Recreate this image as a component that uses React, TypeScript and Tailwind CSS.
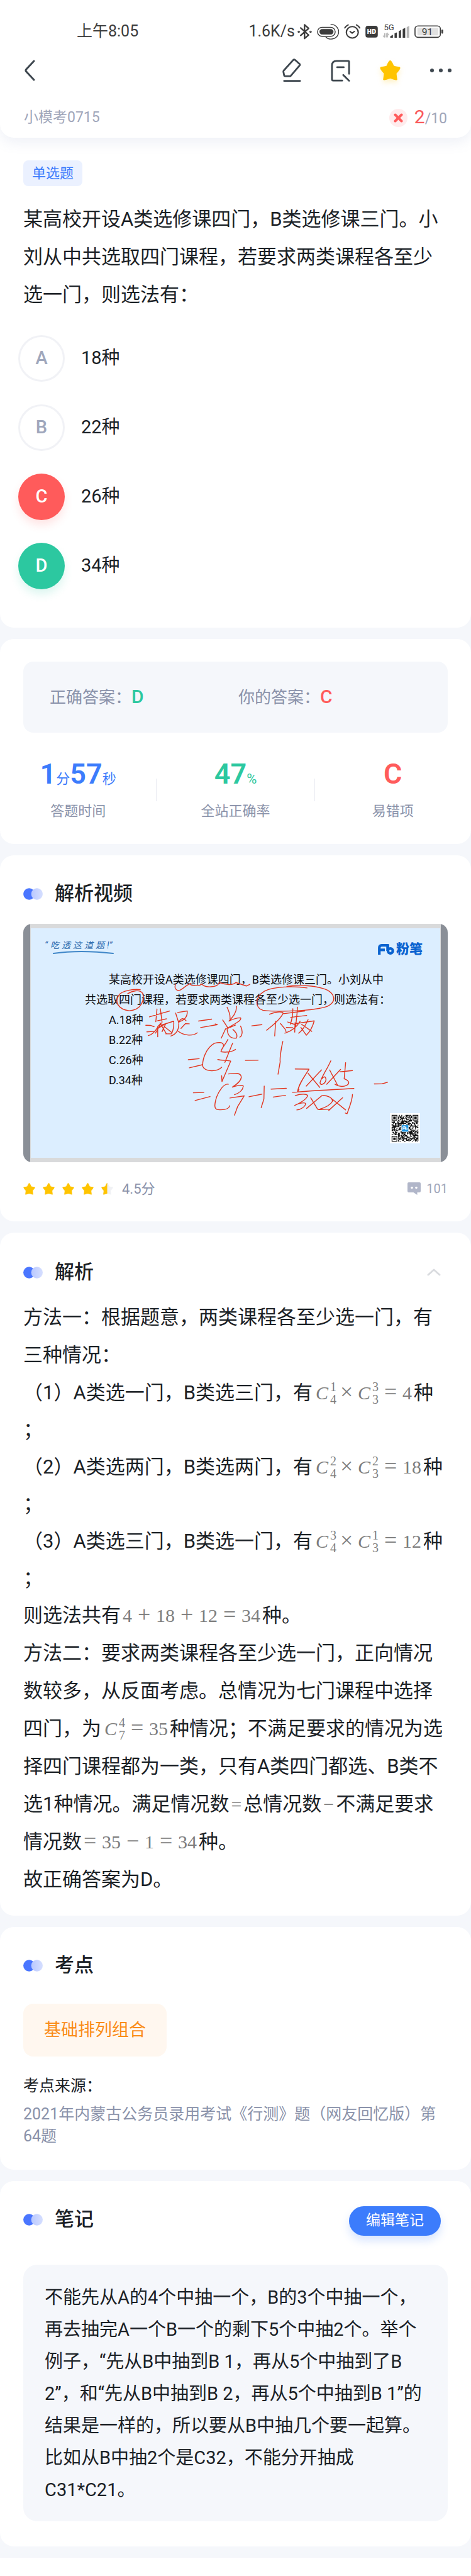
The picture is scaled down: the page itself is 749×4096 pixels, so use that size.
import React from "react";

const STAR =
  "M1040 314 Q1046 314 1059 348 Q1062 353 1100 358 Q1106 362 1077 394 Q1075 398 1081 438 Q1079 441 1040 425 Q1001 441 999 438 Q1005 398 1003 394 Q974 362 980 358 Q1018 353 1021 348 Q1034 314 1040 314 Z";

function StatusBar() {
  return (
    <div className="flex h-[50px] items-center justify-between pl-[122px] pr-[44px] text-[25px] font-normal text-[#3c3c3c]">
      <span>上午8:05</span>
      <div className="flex items-center gap-2">
        <div className="flex items-center gap-1">
          <span>1.6K/s</span>
          <svg className="h-[25px] w-[23px]" viewBox="402 70 98 110" preserveAspectRatio="none" fill="none" stroke="#3c3c3c" strokeWidth="10" strokeLinecap="round" strokeLinejoin="round" aria-label="蓝牙">
            <path d="M424 98 L478 148 L450 172 L450 76 L478 101 L424 151" />
            <circle cx="411" cy="125" r="3" />
            <circle cx="491" cy="125" r="3" />
          </svg>
        </div>
        <svg className="h-[25px] w-[35px]" viewBox="535 70 147 110" preserveAspectRatio="none" fill="none" stroke="#3c3c3c" strokeWidth="6" aria-label="手环">
          <rect x="539" y="94" width="118" height="63" rx="31" />
          <rect x="553" y="107" width="91" height="36" rx="18" fill="#3c3c3c" strokeWidth="3" />
          <path d="M626 74 A51 51 0 1 1 594 162" />
        </svg>
        <svg className="h-[25px] w-[26px]" viewBox="714 70 110 110" preserveAspectRatio="none" fill="none" stroke="#3c3c3c" strokeWidth="9" strokeLinecap="round" aria-label="闹钟">
          <circle cx="770" cy="129" r="40" />
          <path d="M720 98 Q728 84 742 77 M798 77 Q812 84 820 98 M755 123 L769 135 L784 123" />
        </svg>
        <svg className="h-[25px] w-[20px]" viewBox="857 70 87 110" preserveAspectRatio="none" aria-label="HD">
          <rect x="858" y="83" width="85" height="83" rx="17" fill="#3c3c3c" />
          <text x="900" y="141" textAnchor="middle" fontSize="43" fontWeight="800" fill="#fff" fontFamily="Open Sans, sans-serif">HD</text>
        </svg>
        <svg className="h-[25px] w-[42px] overflow-visible" viewBox="976 70 178 110" preserveAspectRatio="none" aria-label="5G">
          <text x="982" y="113" fontSize="56" fill="#3c3c3c" fontFamily="Roboto, sans-serif">5G</text>
          <path d="M987 135 V165 M976 152 L987 165 M998 135 V165 M1007 165 V137 L1016 150" fill="none" stroke="#b5b5b5" strokeWidth="6" />
          <path d="M1025 167 V157 L1043 146 V167 Z M1054 167 V136 L1070 129 V167 Z M1082 167 V122 L1098 112 V167 Z M1109 167 V106 L1126 97 V167 Z" fill="#3c3c3c" />
          <path d="M1136 167 V93 L1153 83 V167 Z" fill="#b5b5b5" />
        </svg>
        <svg className="h-[25px] w-[46px]" viewBox="1190 70 194 110" preserveAspectRatio="none" aria-label="电量">
          <rect x="1194" y="84" width="170" height="80" rx="20" fill="none" stroke="#3c3c3c" strokeWidth="7" />
          <rect x="1210" y="98" width="140" height="52" rx="5" fill="#e1e1e1" />
          <rect x="1371" y="110" width="12" height="28" rx="5" fill="#3c3c3c" />
          <text x="1277" y="148" textAnchor="middle" fontSize="66" fill="#3c3c3c" fontFamily="Roboto, sans-serif">91</text>
        </svg>
      </div>
    </div>
  );
}

function TopBar() {
  return (
    <header className="relative z-10 rounded-b-[22px] bg-white pt-[25px] pb-[10px] shadow-[0_8px_20px_rgba(120,140,190,0.12)]">
      <StatusBar />
      <nav className="flex h-[74px] items-center justify-between pr-[31px] pl-[38px]">
        <button type="button" aria-label="返回">
          <svg className="h-[34px] w-[20px]" viewBox="0 0 20 34" fill="none" stroke="#3e474f" strokeWidth="3" strokeLinecap="round" strokeLinejoin="round">
            <path d="M16 2 L3.5 15.5 Q2.4 17 3.5 18.5 L16 32" />
          </svg>
        </button>
        <div className="flex items-center gap-[47px]">
          <button type="button" aria-label="草稿">
            <svg className="h-[38px] w-[30px]" viewBox="321 310 128 166" preserveAspectRatio="none" fill="none" stroke="#3e474f" strokeWidth="12" strokeLinecap="round" strokeLinejoin="round">
              <path d="M395 320 Q401 315 407 320 L437 347 Q443 353 438 359 L376 433 L342 433 Q334 433 333 427 L328 402 Q328 397 331 393 Z M333 466 H441" />
            </svg>
          </button>
          <button type="button" aria-label="笔记">
            <svg className="h-[35px] w-[31px]" viewBox="648 317 131 152" preserveAspectRatio="none" fill="none" stroke="#3e474f" strokeWidth="12" strokeLinecap="round" strokeLinejoin="round">
              <path d="M771 414 V331 Q771 325 764 325 H688 Q656 325 656 358 V452 Q656 461 664 461 H725 M691 369 H735 M732 422 L771 462" />
            </svg>
          </button>
          <button type="button" aria-label="收藏">
            <svg className="h-[32px] w-[33px] drop-shadow-[0_4px_4px_rgba(255,196,0,0.25)]" viewBox="971 308 138 138" preserveAspectRatio="none" fill="#ffc400" stroke="#ffc400" strokeWidth="12" strokeLinejoin="round">
              <path d={STAR} />
            </svg>
          </button>
          <button type="button" aria-label="更多">
            <svg className="h-[6px] w-[34px]" viewBox="0 0 34 6" fill="#3e474f">
              <circle cx="3" cy="3" r="3" />
              <circle cx="17" cy="3" r="3" />
              <circle cx="31" cy="3" r="3" />
            </svg>
          </button>
        </div>
      </nav>
      <div className="mt-4 flex h-[44px] items-center justify-between px-[38px] text-[23px] text-[#9fa6ba]">
        <h1>小模考0715</h1>
        <div className="flex items-center gap-[11px]">
          <span className="flex size-[29px] items-center justify-center rounded-full bg-[#ffeced]">
            <svg className="size-[15px]" viewBox="0 0 15 15" stroke="#ff5b5b" strokeWidth="4" strokeLinecap="round">
              <path d="M2.5 2.5 L12.5 12.5 M12.5 2.5 L2.5 12.5" />
            </svg>
          </span>
          <span className="flex items-baseline leading-[44px]">
            <span className="text-[30px] text-[#f9585b]">2</span>/10
          </span>
        </div>
      </div>
    </header>
  );
}

const OPTIONS = [
  { key: "A", text: "18种", tone: "border-[3px] border-[#f1f2f6] bg-white text-[#a0a7bc]" },
  { key: "B", text: "22种", tone: "border-[3px] border-[#f1f2f6] bg-white text-[#a0a7bc]" },
  { key: "C", text: "26种", tone: "bg-[#ff5b5b] text-white shadow-[0_8px_14px_rgba(255,91,91,0.16)]" },
  { key: "D", text: "34种", tone: "bg-[#2cc8a0] text-white shadow-[0_8px_14px_rgba(44,200,160,0.16)]" },
];

function Question() {
  return (
    <section className="rounded-b-[22px] bg-white pt-[36px] pb-[61px]">
      <div className="px-[37px]">
        <span className="inline-flex h-[41px] items-center rounded-lg bg-[#ebf1ff] px-[14px] align-top text-[22px] text-[#3c7cfc]">单选题</span>
        <p className="mt-[23px] text-[31px] leading-[60px]">某高校开设A类选修课四门，B类选修课三门。小刘从中共选取四门课程，若要求两类课程各至少选一门，则选法有：</p>
      </div>
      <div className="mt-[34px] flex flex-col items-start gap-[36px] pl-[29px]">
        {OPTIONS.map((o) => (
          <button key={o.key} type="button" className="flex items-center gap-[26px] text-[29px]">
            <span className={`flex size-[74px] items-center justify-center rounded-full font-medium ${o.tone}`}>{o.key}</span>
            <span>{o.text}</span>
          </button>
        ))}
      </div>
    </section>
  );
}

function Stat({ label, tone, children }: { label: string; tone: string; children: React.ReactNode }) {
  return (
    <div>
      <div className={`flex h-[50px] items-baseline justify-center text-[22px] leading-[50px] ${tone}`}>{children}</div>
      <div className="mt-[19px] text-center text-[22px] leading-[30px] text-[#8a92aa]">{label}</div>
    </div>
  );
}

function Big({ children }: { children: React.ReactNode }) {
  return <span className="text-[45px] font-semibold">{children}</span>;
}

function Result() {
  return (
    <section className="rounded-[22px] bg-white pt-[36px] pb-[37px]">
      <div className="mx-[37px] grid h-[113px] grid-cols-2 items-center rounded-[16px] bg-[#f5f7fb] pr-[33px] pl-[42px] text-[26px] text-[#8a92aa]">
        <div className="flex items-baseline leading-[44px]">
          正确答案：<span className="text-[30px] font-medium text-[#2cc8a0]">D</span>
        </div>
        <div className="flex items-baseline leading-[44px]">
          你的答案：<span className="text-[30px] font-medium text-[#ff5b5b]">C</span>
        </div>
      </div>
      <div className="mt-[41px] flex items-center">
        <div className="flex-1">
          <Stat label="答题时间" tone="text-[#3c7cfc]">
            <Big>1</Big>分<Big>57</Big>秒
          </Stat>
        </div>
        <div className="h-[36px] w-[2px] bg-[#f1f2f6]" />
        <div className="flex-1">
          <Stat label="全站正确率" tone="text-[#2cc8a0]">
            <Big>47</Big>%
          </Stat>
        </div>
        <div className="h-[36px] w-[2px] bg-[#f1f2f6]" />
        <div className="flex-1">
          <Stat label="易错项" tone="text-[#ff5b5b]">
            <Big>C</Big>
          </Stat>
        </div>
      </div>
    </section>
  );
}

function Heading({ title, children }: { title: string; children?: React.ReactNode }) {
  return (
    <div className="flex h-[44px] items-center justify-between pr-[11px]">
      <div className="flex items-center gap-[19px]">
        <svg className="h-[19px] w-[31px]" viewBox="0 0 31 19">
          <defs>
            <linearGradient id="dot" x1="0" x2="1">
              <stop offset="0" stopColor="#b9c8ff" />
              <stop offset="1" stopColor="#d6dfff" />
            </linearGradient>
          </defs>
          <circle cx="9.3" cy="9.5" r="9.2" fill="#4a76ff" />
          <circle cx="21.8" cy="9.5" r="9.2" fill="url(#dot)" />
        </svg>
        <h2 className="text-[31px] leading-[44px] font-medium">{title}</h2>
      </div>
      {children}
    </div>
  );
}

const INK_MARKS =
  "M585 438 C578 455 588 470 598 466 C608 460 622 440 635 434 C628 445 660 450 672 437 C680 455 725 455 730 430 C750 440 775 445 785 430 L820 446 L832 438 M425 482 C440 468 465 460 475 480 C482 510 470 558 430 560 C395 555 380 520 395 490 C405 465 450 460 467 463 M1022 455 C980 445 910 448 880 470 C845 500 850 550 875 558 C930 568 1050 560 1090 540 C1125 515 1110 480 1090 465 C1060 445 990 438 955 448";

const INK_LEFT =
  "M488 158 L627 118 M540 104 L532 192 M563 102 L575 195 M463 216 L495 217 L520 226 M470 262 L525 258 M480 287 C500 285 520 270 545 230 M545 185 L605 172 M530 270 L570 200 L545 225 L545 295 M570 215 L655 188 C658 220 650 260 640 275 L600 275 M560 200 L605 275 M590 225 L640 265 M550 235 L600 205 L575 260 M682 128 L748 118 C750 150 735 180 692 192 M668 132 L690 200 C700 170 720 160 740 185 M705 238 L735 205 L762 206 M690 205 C690 240 680 275 635 290 M683 255 C720 285 780 295 817 268 M826 187 L916 174 M840 232 L955 212 L940 207 M1022 92 C1035 120 1045 150 1042 172 M1088 85 C1085 130 1070 150 1035 187 C1060 175 1090 165 1115 165 C1125 180 1080 205 1020 238 M992 180 L1030 238 M1012 240 L982 305 M1022 240 C1025 280 1040 310 1085 305 C1095 290 1090 270 1062 245 M1115 222 C1130 250 1130 285 1110 298 M1040 232 L1080 215 M1192 220 L1262 212 M755 453 L830 446 M763 509 L852 488 M997 355 C997 335 975 330 935 340 C880 370 850 450 855 500 C870 535 950 540 985 505 M1028 313 C1015 345 985 370 980 398 C1010 405 1060 400 1080 382 M1060 340 L1007 472 M958 452 C980 458 1020 458 1047 463 L987 604 L985 563 M1148 458 L1236 457 M790 681 L862 679 M802 734 L905 707 M1030 622 C1000 615 965 670 950 710 C935 760 930 795 960 797 C1000 800 1035 795 1040 770 M1033 551 C1070 545 1120 540 1120 575 C1115 605 1085 625 1058 642 C1090 630 1130 625 1134 635 C1130 665 1100 685 1073 694 M1042 717 L1140 702 L1095 775 L1073 835 M1173 708 L1262 690";

const INK_RIGHT =
  "M55 635 C90 620 140 615 148 628 C130 670 70 710 35 738 M97 680 L90 775 M130 695 L165 735 L168 747 M150 632 L297 614 M215 600 C215 650 210 670 197 700 M248 590 L235 710 M200 655 L310 643 M180 685 L225 700 M170 720 L215 722 M160 757 C200 745 240 720 265 680 M230 690 L228 750 M235 695 L362 678 C350 720 330 750 308 770 L270 720 M320 670 C300 710 275 745 255 757 M275 700 L345 745 M146 810 C130 870 125 930 128 940 L113 1020 M18 1097 L16 1180 L-3 1235 M65 1116 L170 1111 M80 1167 L165 1156 M231 987 L326 988 C300 1030 255 1080 247 1135 L257 1120 M320 1015 L400 1105 M412 993 L307 1097 M476 934 C450 990 410 1040 402 1075 C405 1100 440 1080 443 1055 C440 1030 425 1035 415 1050 M468 993 L523 1092 M543 990 L448 1085 M578 946 L568 1050 C600 1060 610 1080 585 1092 C560 1102 530 1100 505 1085 M540 1005 L625 997 M212 1137 C350 1125 500 1120 635 1112 M231 1158 C270 1145 310 1145 317 1158 C310 1180 265 1205 228 1221 C260 1205 300 1200 303 1210 C300 1230 265 1250 242 1250 M338 1172 L385 1245 M412 1160 L310 1240 M415 1158 C450 1155 490 1170 487 1195 C470 1225 420 1240 390 1248 L470 1245 M478 1175 L578 1250 M557 1172 L462 1253 M625 1150 C625 1190 600 1240 588 1274 L576 1270 M775 1083 L830 1082 L866 1072";

function qrModules() {
  const n = 33;
  let seed = 7;
  let d = "";
  for (let y = 0; y < n; y++) {
    for (let x = 0; x < n; x++) {
      seed = (seed * 1103515245 + 12345) % 2147483648;
      const inFinder = (x < 8 && y < 8) || (x > n - 9 && y < 8) || (x < 8 && y > n - 9);
      if (!inFinder && seed / 2147483648 > 0.48) d += `M${x} ${y}h1.1v1.1h-1.1z`;
    }
  }
  return d;
}

function QrCode() {
  return (
    <svg className="absolute top-[301px] right-[44px] size-[48px]" viewBox="-2.2 -2.2 37.4 37.4" aria-label="二维码">
      <rect x="-2.2" y="-2.2" width="37.4" height="37.4" fill="#fff" />
      <path d={qrModules()} fill="#111" />
      {[[0, 0], [26, 0], [0, 26]].map(([x, y]) => (
        <g key={`${x}-${y}`} fill="#111">
          <path d={`M${x} ${y}h7v7h-7z M${x + 1} ${y + 1}v5h5v-5z`} />
          <rect x={x + 2} y={y + 2} width="3" height="3" />
        </g>
      ))}
      <rect x="12.3" y="12.3" width="8.6" height="8.6" rx="1" fill="#1d97e6" stroke="#fff" strokeWidth="0.5" />
      <path d="M14 18.6 V15.4 Q14 14.6 14.9 14.6 H16.6 V17.6 M14 16.6 H16 M17 14.6 V17.5 M19.3 17.3 A1.1 1.1 0 1 1 17 17.3 A1.1 1.1 0 1 1 19.3 17.3" fill="none" stroke="#fff" strokeWidth="0.9" />
    </svg>
  );
}

function Slide() {
  return (
    <figure className="relative mt-[26px] flex h-[379px] overflow-hidden rounded-[14px] bg-[#8a8f97] px-[11px]">
      <div className="flex-1 border-x border-t-[7px] border-b-[7px] border-[#d9dadb] bg-[#dceeff] pt-[66px] pl-[86px] text-[18px] leading-[32px] whitespace-nowrap text-[#0c0c10]">
        <p className="pl-[38px]">某高校开设A类选修课四门，B类选修课三门。小刘从中</p>
        <p>共选取四门课程，若要求两类课程各至少选一门，则选法有：</p>
        <ul className="pl-[38px]">
          <li>A.18种</li>
          <li>B.22种</li>
          <li>C.26种</li>
          <li>D.34种</li>
        </ul>
      </div>
      <div className="absolute top-[22px] left-[34px] flex items-center gap-[4px] text-[14px] leading-[24px] text-[#2a69ad] italic">
        <span>“</span>
        <span>吃</span>
        <span>透</span>
        <span>这</span>
        <span>道</span>
        <span>题</span>
        <span>!”</span>
      </div>
      <div className="absolute top-[28px] right-[40px] flex items-center gap-[3px] text-[21px] leading-[24px] font-black text-[#0b63d0]">
        <svg className="h-[17px] w-[26px]" viewBox="0 0 26 17" fill="none" stroke="#0b63d0" strokeWidth="4.2">
          <path d="M2.2 17 V6 Q2.2 2.1 6 2.1 H15.5 V11 M3 9.4 H11" />
          <circle cx="19.8" cy="11" r="3.9" />
          <path d="M15.8 2 V11" />
        </svg>
        <span>粉笔</span>
      </div>
      <QrCode />
      <svg className="absolute inset-0 h-full w-full" viewBox="0 0 675 379" fill="none" strokeLinecap="round" strokeLinejoin="round" aria-hidden="true">
        <path d="M48 47 Q90 41 143 47" stroke="#3f86c8" strokeWidth="2" />
        <g stroke="#e2341f" strokeWidth="1.4">
          <path vectorEffect="non-scaling-stroke" transform="matrix(0.4777 0 0 0.3448 -37 -55)" d={INK_MARKS} />
          <path vectorEffect="non-scaling-stroke" transform="matrix(0.2312 0 0 0.231 87.8 111.3)" d={INK_LEFT} />
          <path vectorEffect="non-scaling-stroke" transform="matrix(0.2312 0 0 0.2475 379 -13.5)" d={INK_RIGHT} />
        </g>
      </svg>
    </figure>
  );
}

function RatingStar({ half }: { half?: boolean }) {
  return (
    <svg className="size-[19px]" viewBox="971 308 138 138" strokeWidth="10" strokeLinejoin="round">
      {half && (
        <clipPath id="left-half">
          <rect x="960" y="300" width="80" height="160" />
        </clipPath>
      )}
      {half && <path d={STAR} fill="#f0f1f4" stroke="#f0f1f4" />}
      <path d={STAR} fill="#ffc400" stroke="#ffc400" clipPath={half ? "url(#left-half)" : undefined} />
    </svg>
  );
}

function Video() {
  return (
    <section className="rounded-[22px] bg-white px-[37px] pt-[39px] pb-[37px]">
      <Heading title="解析视频" />
      <Slide />
      <div className="mt-[27px] flex h-[30px] items-center justify-between text-[22px] text-[#8a92aa]">
        <div className="flex items-center gap-[12px]">
          <RatingStar />
          <RatingStar />
          <RatingStar />
          <RatingStar />
          <RatingStar half />
          <span className="pl-[2px]">4.5分</span>
        </div>
        <a href="#comments" className="flex items-center gap-[9px] text-[20px] text-[#9fa6ba]">
          <svg className="h-[20px] w-[21px]" viewBox="0 0 21 20">
            <path d="M2 0 H19 Q21 0 21 2 V14 Q21 16 19 16 H15.5 V20 L9.5 16 H2 Q0 16 0 14 V2 Q0 0 2 0 Z" fill="#b1b6c9" />
            <circle cx="7" cy="8.5" r="1.8" fill="#fff" />
            <circle cx="14" cy="8.5" r="1.8" fill="#fff" />
          </svg>
          101
        </a>
      </div>
    </section>
  );
}

function Formula({ children }: { children: React.ReactNode }) {
  return <span className="mx-[3px] inline-flex h-[40px] items-baseline align-baseline font-['Liberation_Serif',serif] text-[30px] leading-[40px] text-[#7d7d7d]">{children}</span>;
}

function Comb({ up, down }: { up: string; down: string }) {
  return (
    <span className="flex items-center gap-[3px] pl-[2px]">
      <i>C</i>
      <span className="flex flex-col text-[20px] leading-[20px]">
        <span>{up}</span>
        <span>{down}</span>
      </span>
    </span>
  );
}

function Op({ children, tight }: { children: string; tight?: boolean }) {
  return <span className={`w-[20px] text-center text-[36px] ${tight ? "mx-[6px]" : "mx-[9px]"}`}>{children}</span>;
}

function Cases() {
  return (
    <div className="leading-[59px]">
      <p>
        （1）A类选一门，B类选三门，有
        <Formula>
          <Comb up="1" down="4" />
          <Op tight>×</Op>
          <Comb up="3" down="3" />
          <Op>=</Op>4
        </Formula>
        种<br />；
      </p>
      <p>
        （2）A类选两门，B类选两门，有
        <Formula>
          <Comb up="2" down="4" />
          <Op tight>×</Op>
          <Comb up="2" down="3" />
          <Op>=</Op>18
        </Formula>
        种<br />；
      </p>
      <p>
        （3）A类选三门，B类选一门，有
        <Formula>
          <Comb up="3" down="4" />
          <Op tight>×</Op>
          <Comb up="1" down="3" />
          <Op>=</Op>12
        </Formula>
        种<br />；
      </p>
    </div>
  );
}

function Analysis() {
  return (
    <section className="rounded-[22px] bg-white px-[37px] pt-[41px] pb-[27px]">
      <Heading title="解析">
        <button type="button" aria-label="收起">
          <svg className="h-[12px] w-[22px]" viewBox="0 0 22 12" fill="none" stroke="#d9dbdf" strokeWidth="3" strokeLinecap="round" strokeLinejoin="round">
            <path d="M2 10 L11 2 L20 10" />
          </svg>
        </button>
      </Heading>
      <div className="mt-[20px] text-[31px] leading-[60px]">
        <p>方法一：根据题意，两类课程各至少选一门，有三种情况：</p>
        <Cases />
        <p>
          则选法共有
          <Formula>
            4<Op>+</Op>18<Op>+</Op>12<Op>=</Op>34
          </Formula>
          种。
        </p>
        <p>
          方法二：要求两类课程各至少选一门，正向情况数较多，从反面考虑。总情况为七门课程中选择四门，为
          <Formula>
            <Comb up="4" down="7" />
            <Op>=</Op>35
          </Formula>
          种情况；不满足要求的情况为选择四门课程都为一类，只有A类四门都选、B类不选1种情况。满足情况数
          <Formula>=</Formula>
          总情况数
          <Formula>−</Formula>
          不满足要求情况数
          <Formula>
            <span className="w-[20px] text-center text-[36px]">=</span>
            <span className="pl-[9px]">35</span>
            <Op>−</Op>1<Op>=</Op>34
          </Formula>
          种。
        </p>
        <p>故正确答案为D。</p>
      </div>
    </section>
  );
}

function Topic() {
  return (
    <section className="rounded-[22px] bg-white px-[37px] pt-[39px] pb-[36px]">
      <Heading title="考点" />
      <a href="#topic" className="mt-[39px] flex h-[84px] w-fit items-center rounded-[16px] bg-[#fff7ef] px-[33px] text-[27px] text-[#fa8c16]">
        基础排列组合
      </a>
      <h3 className="mt-[29px] text-[25px] leading-[35px]">考点来源：</h3>
      <p className="mt-[10px] text-[25px] leading-[35px] text-[#8a92aa]">2021年内蒙古公务员录用考试《行测》题（网友回忆版）第64题</p>
    </section>
  );
}

function Notes() {
  return (
    <section className="rounded-[22px] bg-white px-[37px] pt-[39px] pb-[40px]">
      <Heading title="笔记">
        <button type="button" className="mt-[5px] h-[47px] rounded-full bg-[#3c7cfc] px-[27px] text-[23px] text-white shadow-[0_8px_14px_rgba(60,124,252,0.2)]">
          编辑笔记
        </button>
      </Heading>
      <p className="mt-[50px] rounded-[22px] bg-[#f5f7fb] px-[34px] pt-[27px] pb-[24px] text-[29px] leading-[51px]">
        不能先从A的4个中抽一个，B的3个中抽一个，再去抽完A一个B一个的剩下5个中抽2个。举个例子，“先从B中抽到B 1，再从5个中抽到了B 2”，和“先从B中抽到B 2，再从5个中抽到B 1”的结果是一样的，所以要从B中抽几个要一起算。比如从B中抽2个是C32，不能分开抽成C31*C21。
      </p>
    </section>
  );
}

export default function App() {
  return (
    <div lang="zh-CN" className="min-h-screen bg-white font-[Roboto,'Noto_Sans_CJK_SC',sans-serif] text-[#1b2126]">
      <div className="bg-white">
        <TopBar />
      </div>
      <main className="flex flex-col gap-[18px] bg-[#f5f7fb] pb-[18px]">
        <Question />
        <Result />
        <Video />
        <Analysis />
        <Topic />
        <Notes />
      </main>
      <footer className="h-[29px] bg-white" />
    </div>
  );
}
